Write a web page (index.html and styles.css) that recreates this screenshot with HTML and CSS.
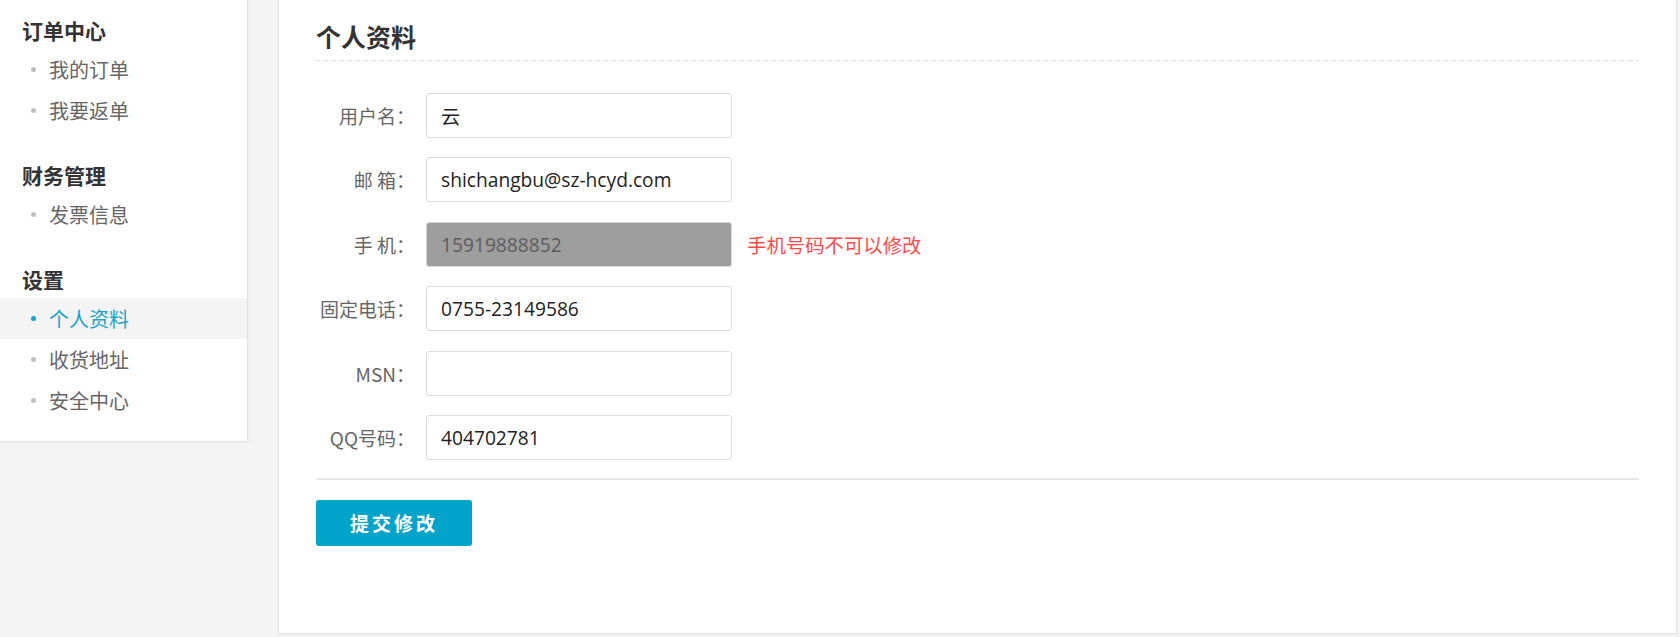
FILE: index.html
```html
<!DOCTYPE html>
<html lang="zh-CN">
<head>
    <meta charset="UTF-8">
    <title>个人资料</title>
    <link rel="stylesheet" href="styles.css">
</head>
<body>
    <div class="layout">
        <aside class="sidebar">
            <div class="menu-group">
                <h3 class="menu-title">订单中心</h3>
                <ul class="menu-list">
                    <li class="menu-item">我的订单</li>
                    <li class="menu-item">我要返单</li>
                </ul>
            </div>
            <div class="menu-group">
                <h3 class="menu-title">财务管理</h3>
                <ul class="menu-list">
                    <li class="menu-item">发票信息</li>
                </ul>
            </div>
            <div class="menu-group">
                <h3 class="menu-title">设置</h3>
                <ul class="menu-list">
                    <li class="menu-item active">个人资料</li>
                    <li class="menu-item">收货地址</li>
                    <li class="menu-item">安全中心</li>
                </ul>
            </div>
        </aside>

        <main class="panel">
            <h2 class="panel-title">个人资料</h2>
            <form class="profile-form">
                <div class="form-row">
                    <label class="form-label">用户名：</label>
                    <input class="form-input" type="text" value="云">
                </div>
                <div class="form-row">
                    <label class="form-label">邮 箱：</label>
                    <input class="form-input" type="text" value="shichangbu@sz-hcyd.com">
                </div>
                <div class="form-row">
                    <label class="form-label">手 机：</label>
                    <input class="form-input disabled" type="text" value="15919888852" disabled>
                    <span class="form-tip">手机号码不可以修改</span>
                </div>
                <div class="form-row">
                    <label class="form-label">固定电话：</label>
                    <input class="form-input" type="text" value="0755-23149586">
                </div>
                <div class="form-row">
                    <label class="form-label">MSN：</label>
                    <input class="form-input" type="text" value="">
                </div>
                <div class="form-row">
                    <label class="form-label">QQ号码：</label>
                    <input class="form-input" type="text" value="404702781">
                </div>
                <div class="form-divider"></div>
                <button class="submit-btn" type="button">提交修改</button>
            </form>
        </main>
    </div>
</body>
</html>
```

FILE: styles.css
```css
:root {
    --page-bg: #f4f4f4;
    --border-color: #e3e3e3;
    --text-color: #333333;
    --muted-color: #666666;
    --accent-color: #1aa2cc;
    --button-color: #03a4ca;
    --warn-color: #ff4a4a;
}

* {
    margin: 0;
    padding: 0;
    box-sizing: border-box;
}

body {
    font-family: "Open Sans", "Noto Sans CJK SC", sans-serif;
    color: var(--text-color);
    background: var(--page-bg);
    width: 100%;
    height: 637px;
    overflow: hidden;
}

.layout {
    display: flex;
    align-items: flex-start;
    padding-right: 3px;
}

/* left menu */
.sidebar {
    width: 248px;
    background: #ffffff;
    border-right: 1px solid var(--border-color);
    border-bottom: 1px solid var(--border-color);
    box-shadow: 1px 1px 2px rgba(0, 0, 0, 0.04);
    padding: 11px 0 20px;
}

.menu-group + .menu-group {
    margin-top: 25px;
}

.menu-title {
    font-family: "Noto Sans CJK SC", sans-serif;
    font-size: 21px;
    font-weight: bold;
    line-height: 38px;
    color: #333333;
    padding-left: 22px;
}

.menu-list {
    list-style: none;
}

.menu-item {
    font-family: "Noto Sans CJK SC", sans-serif;
    display: flex;
    align-items: center;
    height: 41px;
    padding-left: 31px;
    font-size: 20px;
    color: var(--muted-color);
}

.menu-item::before {
    content: "";
    width: 5px;
    height: 5px;
    border-radius: 50%;
    background: #c0c0c0;
    margin-right: 13px;
}

.menu-item.active {
    background: var(--page-bg);
    color: var(--accent-color);
}

.menu-item.active::before {
    background: var(--accent-color);
}

/* main panel */
.panel {
    flex: 1;
    height: 634px;
    margin-left: 30px;
    background: #ffffff;
    border: 1px solid var(--border-color);
    border-top: none;
    box-shadow: 0 1px 2px rgba(0, 0, 0, 0.04);
    padding: 0 37px;
}

.panel-title {
    font-family: "Noto Sans CJK SC", sans-serif;
    font-size: 25px;
    font-weight: bold;
    line-height: 34px;
    color: #333333;
    padding: 19px 0 8px;
    background-image: linear-gradient(to right, #e2e2e2 5px, transparent 5px);
    background-size: 8px 1px;
    background-repeat: repeat-x;
    background-position: left bottom;
}

.profile-form {
    padding-top: 32px;
}

.form-row {
    display: flex;
    align-items: center;
    height: 45px;
}

.form-row + .form-row {
    margin-top: 19.4px;
}

.form-label {
    flex: none;
    width: 99px;
    margin-right: 11px;
    text-align: right;
    font-family: "Noto Sans CJK SC", sans-serif;
    font-size: 19px;
    color: var(--muted-color);
    white-space: nowrap;
}

.form-input {
    width: 306px;
    height: 45px;
    padding: 0 14px;
    border: 1px solid #dcdcdc;
    border-radius: 3px;
    background: #ffffff;
    font-family: "Open Sans", "Noto Sans CJK SC", sans-serif;
    font-size: 19.2px;
    color: #222222;
    outline: none;
}

.form-input.disabled {
    background: #9e9e9e;
    color: #5c5c5c;
    border-color: #d6d6d6;
}

.form-tip {
    font-family: "Noto Sans CJK SC", sans-serif;
    margin-left: 15px;
    font-size: 19.4px;
    color: var(--warn-color);
}

.form-divider {
    height: 2px;
    background: #e7e7e7;
    margin-top: 18px;
}

.submit-btn {
    display: block;
    margin-top: 20px;
    width: 156px;
    height: 46px;
    border: none;
    border-radius: 3px;
    background: var(--button-color);
    color: #ffffff;
    font-family: "Noto Sans CJK SC", sans-serif;
    font-size: 19px;
    font-weight: bold;
    letter-spacing: 3px;
    cursor: pointer;
}
```
